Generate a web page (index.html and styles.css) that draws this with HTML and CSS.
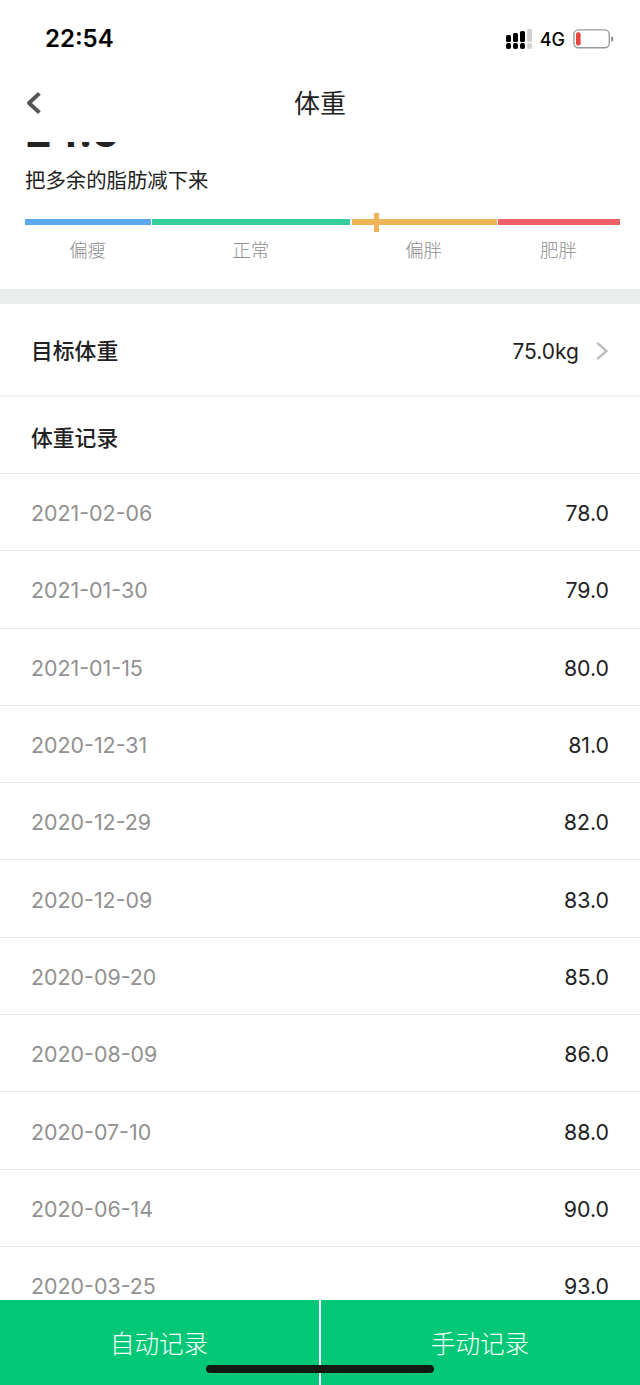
FILE: index.html
```html
<!DOCTYPE html>
<html lang="zh-CN">
<head>
  <meta charset="UTF-8">
  <meta name="viewport" content="width=device-width, initial-scale=1.0">
  <title>体重</title>
  <link rel="stylesheet" href="styles.css">
</head>
<body>
  <div class="app">
    <div class="status-bar">
      <span class="time">22:54</span>
      <div class="status-icons">
        <svg class="signal" width="26" height="21" viewBox="0 0 26 21">
          <rect x="0" y="6" width="5" height="7" rx="1.5"/>
          <rect x="7" y="4" width="5" height="9" rx="1.5"/>
          <rect x="14" y="2" width="5" height="11" rx="1.5"/>
          <rect class="off" x="21" y="0" width="5" height="13" rx="1.5"/>
          <rect x="0" y="14" width="5" height="6" rx="2"/>
          <rect x="7" y="14" width="5" height="6" rx="2"/>
          <rect x="14" y="14" width="5" height="6" rx="2"/>
          <rect class="off" x="21" y="14" width="5" height="6" rx="2"/>
        </svg>
        <span class="network">4G</span>
        <svg width="42" height="20" viewBox="0 0 42 20">
          <rect x="0.9" y="0.9" width="35.4" height="17.8" rx="4.5" fill="none" stroke="#999" stroke-width="1.4"/>
          <rect x="3" y="3.2" width="4.6" height="13.2" rx="2" fill="#e8443a"/>
          <path d="M38.2 7.2c2.8.6 2.8 5 0 5.6z" fill="#888"/>
        </svg>
      </div>
    </div>

    <div class="nav-bar">
      <a class="back" href="#">
        <svg width="16" height="24" viewBox="0 0 16 24">
          <path d="M13.4 2.4L3 12l10.4 9.6" fill="none" stroke="#555" stroke-width="4" stroke-linejoin="round"/>
        </svg>
      </a>
      <h1>体重</h1>
    </div>

    <div class="content">
      <div class="summary">
        <div class="bmi">24.6</div>
        <p class="advice">把多余的脂肪减下来</p>
        <div class="scale">
          <div class="level thin"><span>偏瘦</span></div>
          <div class="level normal"><span>正常</span></div>
          <div class="level over"><i class="marker"></i><span>偏胖</span></div>
          <div class="level obese"><span>肥胖</span></div>
        </div>
      </div>

      <div class="target">
        <h2>目标体重</h2>
        <span class="value">75.0kg</span>
        <svg width="12" height="20" viewBox="0 0 12 20">
          <path d="M1.2 1.8L10.4 10l-9.2 8.2" fill="none" stroke="#bdbdbd" stroke-width="2.4"/>
        </svg>
      </div>

      <div class="records">
        <h2>体重记录</h2>
        <div class="record"><span class="date">2021-02-06</span><span class="value">78.0</span></div>
        <div class="record"><span class="date">2021-01-30</span><span class="value">79.0</span></div>
        <div class="record"><span class="date">2021-01-15</span><span class="value">80.0</span></div>
        <div class="record"><span class="date">2020-12-31</span><span class="value">81.0</span></div>
        <div class="record"><span class="date">2020-12-29</span><span class="value">82.0</span></div>
        <div class="record"><span class="date">2020-12-09</span><span class="value">83.0</span></div>
        <div class="record"><span class="date">2020-09-20</span><span class="value">85.0</span></div>
        <div class="record"><span class="date">2020-08-09</span><span class="value">86.0</span></div>
        <div class="record"><span class="date">2020-07-10</span><span class="value">88.0</span></div>
        <div class="record"><span class="date">2020-06-14</span><span class="value">90.0</span></div>
        <div class="record"><span class="date">2020-03-25</span><span class="value">93.0</span></div>
      </div>
    </div>

    <div class="actions">
      <button>自动记录</button>
      <button>手动记录</button>
      <div class="home-indicator"></div>
    </div>
  </div>
</body>
</html>
```
FILE: styles.css
```css
* {
  box-sizing: border-box;
}

body {
  margin: 0;
  background: #fff;
  color: #222;
  font-family: Inter, "Noto Sans CJK SC", sans-serif;
}

h1,
h2,
p {
  margin: 0;
}

.app {
  display: flex;
  flex-direction: column;
  height: 1385px;
  overflow: hidden;
}

/* Status bar */
.status-bar {
  flex: none;
  display: flex;
  justify-content: space-between;
  align-items: center;
  height: 77px;
  padding: 0 25px 0 45px;
  color: #000;
}

.time {
  font-size: 24px;
  font-weight: 600;
}

.status-icons {
  display: flex;
  align-items: center;
}

.signal {
  margin-top: 2px;
}

.signal .off {
  fill: #d0d0d0;
}

.network {
  margin: 0 8px;
  padding-top: 1px;
  font-size: 18px;
  font-weight: 500;
}

/* Nav bar */
.nav-bar {
  flex: none;
  display: grid;
  grid-template-columns: 60px 1fr 60px;
  align-items: center;
  height: 65px;
  padding-bottom: 13px;
}

.back {
  display: flex;
  padding-left: 26px;
}

.nav-bar h1 {
  padding-top: 2px;
  font-size: 26px;
  font-weight: 400;
  line-height: 38px;
  text-align: center;
}

/* Content, scrolled under the nav bar */
.content {
  flex: 1;
  min-height: 0;
  overflow: hidden;
}

.summary {
  display: flow-root;
  height: 162px;
  padding: 0 20px 0 25px;
  border-bottom: 15px solid #e9eeed;
}

.bmi {
  margin-top: -38px;
  font-size: 42.5px;
  font-weight: 700;
  line-height: 56px;
}

.advice {
  margin-top: 6px;
  font-size: 20.4px;
  line-height: 30px;
}

.scale {
  display: grid;
  grid-template-columns: 126px 198px 145px 122px;
  gap: 1.3px;
  margin-top: 23px;
}

.level {
  position: relative;
  border-top: 6px solid;
  text-align: center;
}

.level span {
  display: block;
  margin: 11px 1px 0 0;
  font-size: 18.5px;
  font-weight: 300;
  line-height: 28px;
  color: #8e8e8e;
}

.thin {
  border-color: #5aa9ee;
}

.normal {
  border-color: #35cf9a;
}

.over {
  border-color: #efb456;
}

.obese {
  border-color: #ee6065;
}

.marker {
  position: absolute;
  top: -12px;
  left: 22px;
  width: 5px;
  height: 19px;
  background: #efb456;
}

h2 {
  font-size: 21.8px;
  font-weight: 500;
  line-height: 32px;
}

.value {
  font-size: 21.3px;
}

.target {
  display: flex;
  align-items: center;
  height: 93px;
  padding: 3px 32px 0 31px;
  border-bottom: 2px solid #f1f1f1;
}

.target .value {
  margin: 0 17px 0 auto;
  font-size: 21px;
}

.records h2 {
  height: 77px;
  padding: 25px 31px 0;
  border-bottom: 1px solid #e8e8e8;
}

.record {
  display: flex;
  justify-content: space-between;
  align-items: center;
  height: 77.3px;
  padding: 2px 31px 0;
  border-bottom: 1px solid #e8e8e8;
}

.date {
  font-size: 21.4px;
  color: #919191;
}

/* Bottom buttons */
.actions {
  position: relative;
  flex: none;
  display: flex;
  gap: 2px;
  height: 85px;
}

.actions button {
  flex: 1;
  padding: 0 1px 0 0;
  border: none;
  background: #02c777;
  color: #fff;
  font-family: inherit;
  font-size: 24.5px;
  font-weight: 300;
  cursor: pointer;
}

.home-indicator {
  position: absolute;
  bottom: 12px;
  left: 206px;
  width: 228px;
  height: 8px;
  border-radius: 4px;
  background: #111a14;
}
```
